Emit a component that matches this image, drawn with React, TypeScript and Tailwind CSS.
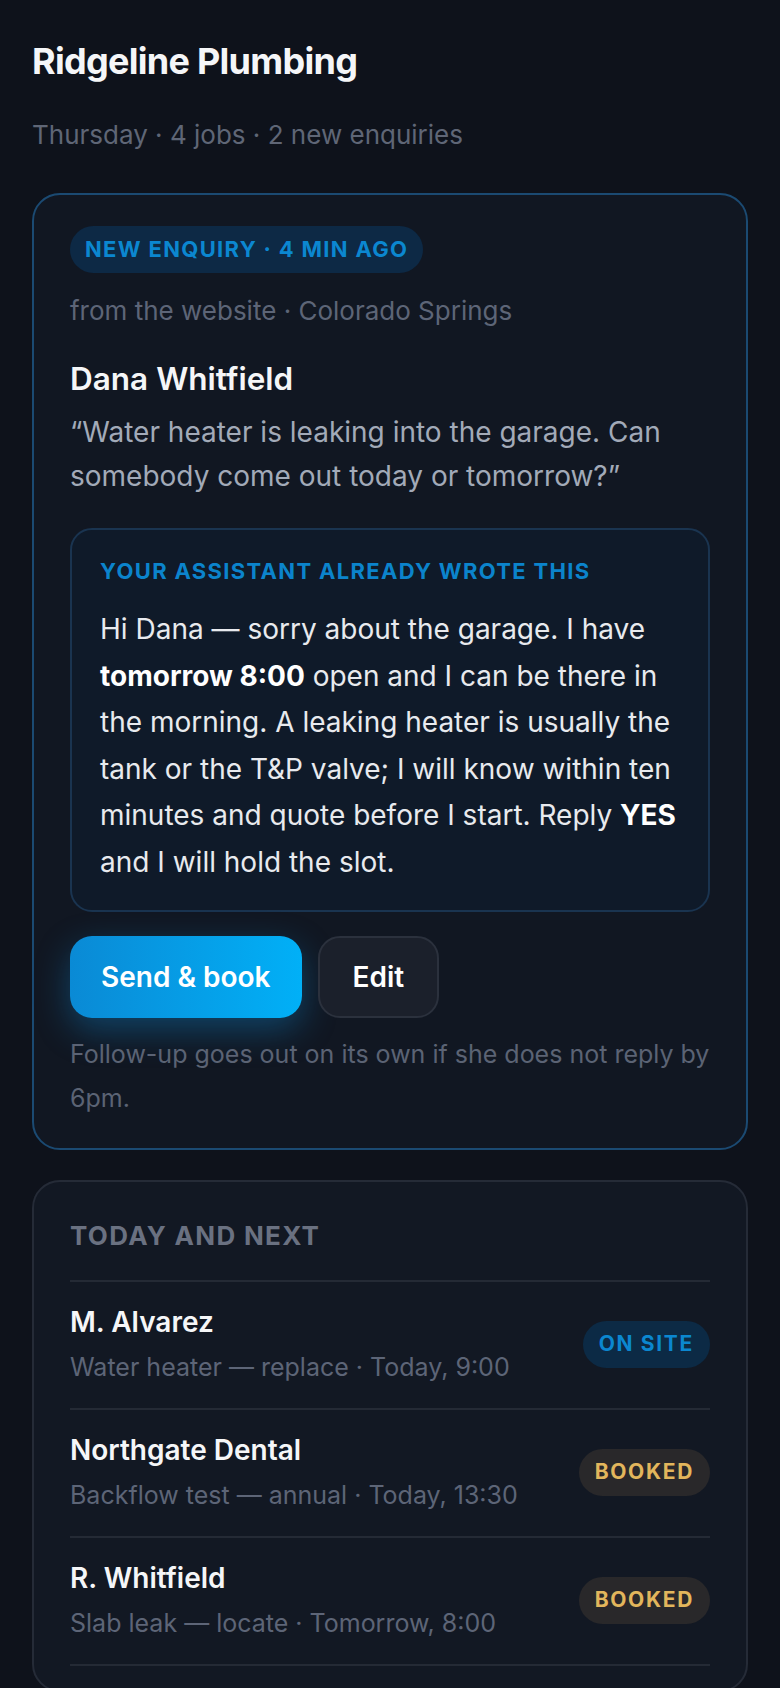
import React from 'react';

type Job = {
    id: string;
    name: string;
    detail: string;
    status: 'onsite' | 'booked';
};

const jobs: Job[] = [
    { id: 'j1', name: 'M. Alvarez', detail: 'Water heater — replace · Today, 9:00', status: 'onsite' },
    { id: 'j2', name: 'Northgate Dental', detail: 'Backflow test — annual · Today, 13:30', status: 'booked' },
    { id: 'j3', name: 'R. Whitfield', detail: 'Slab leak — locate · Tomorrow, 8:00', status: 'booked' },
];

const StatusPill: React.FC<{ status: Job['status'] }> = ({ status }) =>
    status === 'onsite' ? (
        <span className="shrink-0 h-[47px] px-[16px] rounded-full bg-[#0c2a45] text-[#0b87d0] text-[21px] font-bold tracking-[0.08em] flex items-center">
            ON SITE
        </span>
    ) : (
        <span className="shrink-0 h-[47px] px-[16px] rounded-full bg-[#29282a] text-[#e2b65c] text-[21px] font-bold tracking-[0.08em] flex items-center">
            BOOKED
        </span>
    );

export default function App() {
    return (
        <div className="min-h-screen bg-[#0e121b] px-8 pt-[39px] pb-16 font-['Inter',sans-serif] antialiased">
            <h1 className="text-[36px] leading-[44px] font-bold text-[#f5f6f8] tracking-[-0.02em]">Ridgeline Plumbing</h1>
            <p className="mt-[34px] text-[26px] leading-[36px] text-[#5f6676]">Thursday · 4 jobs · 2 new enquiries</p>

            {/* new enquiry card */}
            <div className="mt-[40px] rounded-[28px] border-2 border-[#1b4a72] bg-[#111722] px-[36px] pt-[31px] pb-[28px]">
                <span className="inline-flex h-[47px] items-center rounded-full bg-[#0d2945] px-[15px] text-[22px] font-bold tracking-[0.06em] text-[#0b87d0]">
                    NEW ENQUIRY · 4 MIN AGO
                </span>
                <p className="mt-[20px] text-[26px] leading-[36px] text-[#5d6577]">from the website · Colorado Springs</p>
                <h2 className="mt-[30px] text-[31.5px] leading-[40px] font-semibold text-[#f5f6f8]">Dana Whitfield</h2>
                <p className="mt-[11px] text-[28px] leading-[44px] text-[#a2aab8]">
                    “Water heater is leaking into the garage. Can somebody come out today or tomorrow?”
                </p>

                <div className="mt-[30px] rounded-[22px] border-2 border-[#1a3450] bg-[#0f1a29] px-[28px] pt-[26px] pb-[24px]">
                    <p className="text-[22px] leading-[30px] font-bold tracking-[0.06em] text-[#0b84cc]">YOUR ASSISTANT ALREADY WROTE THIS</p>
                    <p className="mt-[20px] text-[28px] leading-[46.6px] text-[#e8eaee]">
                        Hi Dana — sorry about the garage. I have <strong className="font-bold text-white">tomorrow 8:00</strong> open and I can
                        be there in the morning. A leaking heater is usually the tank or the T&amp;P valve; I will know within ten minutes and
                        quote before I start. Reply <strong className="font-bold text-white">YES</strong> and I will hold the slot.
                    </p>
                </div>

                <div className="mt-[24px] flex gap-[16px]">
                    <button className="h-[82px] px-[31px] rounded-[22px] bg-gradient-to-r from-[#0a8ad5] to-[#01b0f7] text-white text-[28px] font-semibold shadow-[0_12px_34px_rgba(14,150,230,0.35)]">
                        Send &amp; book
                    </button>
                    <button className="h-[82px] px-[33px] rounded-[22px] border-2 border-[#2b313d] bg-[#1b202b] text-white text-[28px] font-semibold">
                        Edit
                    </button>
                </div>

                <p className="mt-[14px] text-[25px] leading-[44px] text-[#5b6374]">
                    Follow-up goes out on its own if she does not reply by 6pm.
                </p>
            </div>

            {/* schedule card */}
            <div className="mt-[30px] rounded-[28px] border-2 border-[#252b37] bg-[#121823] px-[36px] pt-[38px] pb-[24px]">
                <p className="text-[26px] leading-[32px] font-bold tracking-[0.05em] text-[#6a7181]">TODAY AND NEXT</p>
                <div className="mt-[28px] border-t-2 border-[#242a35]">
                    {jobs.map((job) => (
                        <div key={job.id} className="flex items-center justify-between gap-4 border-b-2 border-[#242a35] pt-[22px] pb-[23px]">
                            <div>
                                <p className="text-[28px] leading-[36px] font-semibold text-[#f5f6f8]">{job.name}</p>
                                <p className="mt-[9px] text-[25px] leading-[36px] text-[#5d6577]">{job.detail}</p>
                            </div>
                            <StatusPill status={job.status} />
                        </div>
                    ))}
                </div>
            </div>
        </div>
    );
}
